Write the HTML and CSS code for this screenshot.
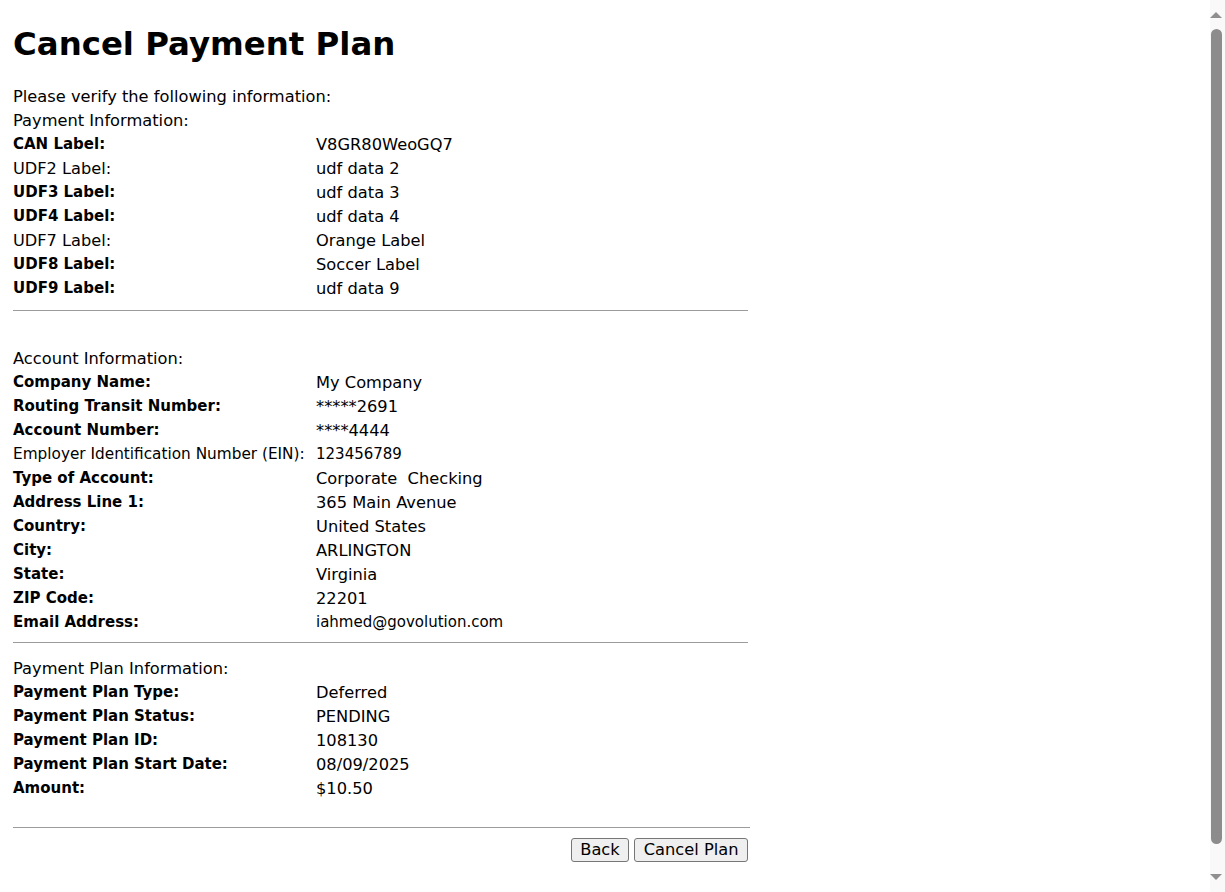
FILE: index.html
```html
<!DOCTYPE html>
<html lang="en">
<head>
<meta charset="utf-8">
<title>Cancel Payment Plan</title>
<link rel="stylesheet" href="styles.css">
</head>
<body>
<div class="page">
  <h1 class="title">Cancel Payment Plan</h1>
  <p class="intro">Please verify the following information:</p>

  <section class="section">
    <div class="section-title">Payment Information:</div>
    <div class="grid">
      <div class="label b">CAN Label:</div><div class="value">V8GR80WeoGQ7</div>
      <div class="label r">UDF2 Label:</div><div class="value">udf data 2</div>
      <div class="label b">UDF3 Label:</div><div class="value">udf data 3</div>
      <div class="label b">UDF4 Label:</div><div class="value">udf data 4</div>
      <div class="label r">UDF7 Label:</div><div class="value">Orange Label</div>
      <div class="label b">UDF8 Label:</div><div class="value">Soccer Label</div>
      <div class="label b">UDF9 Label:</div><div class="value">udf data 9</div>
    </div>
  </section>
  <hr class="rule rule-1">

  <section class="section">
    <div class="section-title">Account Information:</div>
    <div class="grid">
      <div class="label b">Company Name:</div><div class="value">My Company</div>
      <div class="label b">Routing Transit Number:</div><div class="value">*****2691</div>
      <div class="label b">Account Number:</div><div class="value">****4444</div>
      <div class="label">Employer Identification Number (EIN):</div><div class="value small">123456789</div>
      <div class="label b">Type of Account:</div><div class="value">Corporate&nbsp; Checking</div>
      <div class="label b">Address Line 1:</div><div class="value">365 Main Avenue</div>
      <div class="label b">Country:</div><div class="value">United States</div>
      <div class="label b">City:</div><div class="value">ARLINGTON</div>
      <div class="label b">State:</div><div class="value">Virginia</div>
      <div class="label b">ZIP Code:</div><div class="value">22201</div>
      <div class="label b">Email Address:</div><div class="value small">iahmed@govolution.com</div>
    </div>
  </section>
  <hr class="rule rule-2">

  <section class="section">
    <div class="section-title">Payment Plan Information:</div>
    <div class="grid">
      <div class="label b">Payment Plan Type:</div><div class="value">Deferred</div>
      <div class="label b">Payment Plan Status:</div><div class="value">PENDING</div>
      <div class="label b">Payment Plan ID:</div><div class="value">108130</div>
      <div class="label b">Payment Plan Start Date:</div><div class="value">08/09/2025</div>
      <div class="label b">Amount:</div><div class="value">$10.50</div>
    </div>
  </section>
  <hr class="rule rule-3">

  <div class="actions">
    <button class="btn" type="button">Back</button>
    <button class="btn" type="button">Cancel Plan</button>
  </div>
</div>

<div class="scrollbar" aria-hidden="true">
  <div class="sb-arrow sb-up"></div>
  <div class="sb-thumb"></div>
  <div class="sb-arrow sb-down"></div>
</div>
</body>
</html>
```

FILE: styles.css
```css
body {
  margin: 0;
  background: #ffffff;
  color: #000000;
  font-family: "DejaVu Sans", Verdana, sans-serif;
  font-size: 16.25px;
}

.page {
  padding: 25px 13px 86px 13px;
  width: 737px;
}

.title {
  margin: 0 0 22px 0;
  font-size: 32.4px;
  line-height: 38px;
  font-weight: bold;
}

.intro {
  margin: 0;
  line-height: 24px;
}

.section-title {
  line-height: 23px;
}

.grid {
  display: grid;
  grid-template-columns: 303px auto;
  grid-auto-rows: 24px;
  align-items: center;
}

.label {
  font-size: 15.3px;
  white-space: nowrap;
}

.label.b {
  font-size: 15px;
  font-weight: bold;
}

.label.r {
  font-size: 16.2px;
}

.value {
  font-size: 16.25px;
  white-space: nowrap;
}

.value.small {
  font-size: 15px;
}

.rule {
  border: 0;
  border-top: 1px solid #9c9c9c;
  margin: 10px 0 0 0;
  height: 0;
  width: 735px;
}

.rule-1 {
  margin-bottom: 36px;
}

.rule-2 {
  margin-top: 8px;
  margin-bottom: 14px;
}

.rule-3 {
  margin-top: 27px;
  margin-bottom: 10px;
  width: 737px;
}

.actions {
  display: flex;
  justify-content: flex-end;
  gap: 5px;
  width: 735px;
}

.btn {
  font-family: "DejaVu Sans", Verdana, sans-serif;
  font-size: 16.25px;
  line-height: 20px;
  padding: 1px 8.5px;
  background: #efefef;
  color: #000;
  border: 1px solid #767676;
  border-radius: 3px;
}

/* decorative page scrollbar overlay */
.scrollbar {
  position: fixed;
  top: 0;
  right: 0;
  width: 15px;
  height: 100vh;
  background: #f9f9f9;
  display: flex;
  flex-direction: column;
  align-items: center;
  padding: 12px 3px 12px 0;
  box-sizing: border-box;
}

.sb-arrow {
  width: 0;
  height: 0;
  border-left: 6px solid transparent;
  border-right: 6px solid transparent;
  flex: none;
}

.sb-up {
  border-bottom: 6px solid #8f8f8f;
}

.sb-down {
  border-top: 6px solid #8f8f8f;
}

.sb-thumb {
  width: 11px;
  margin: 11px 0 30px 0;
  flex: 1;
  background: #8c8c8c;
  border-radius: 6px;
}
```
